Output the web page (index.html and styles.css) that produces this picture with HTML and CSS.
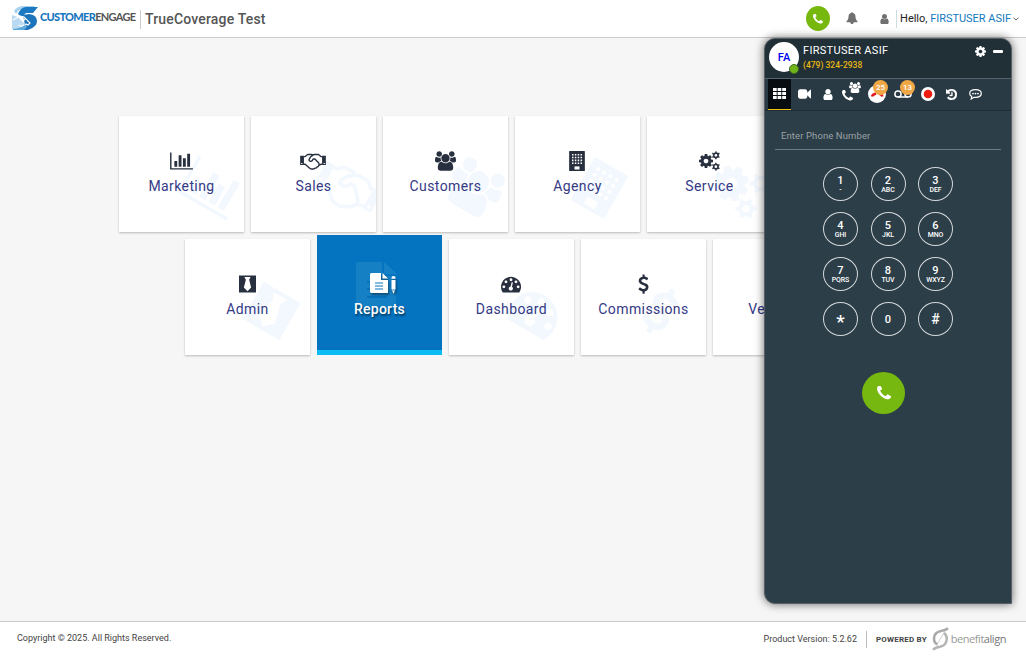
FILE: index.html
```html
<!DOCTYPE html>
<html lang="en">
<head>
<meta charset="utf-8">
<title>TrueCoverage Test</title>
<link rel="stylesheet" href="styles.css">
</head>
<body>
<svg class="sprite" width="0" height="0">
  <symbol id="bars" viewBox="0 0 2048 1792"><path d="M640 896v512h-256v-512h256zm384-512v1024h-256v-1024h256zm1024 1152v128h-2048v-1536h128v1408h1920zm-640-896v768h-256v-768h256zm384-384v1152h-256v-1152h256z"/></symbol>
  <symbol id="handshake" viewBox="0 0 2304 1792"><path d="M0 420h340v840H0zM1964 420h340v840h-340z"/><path d="M340 500h110l230-190h360l110 60 110-60h380l220 190h104M340 1190h110l380 330q150 130 320 80 110 30 200-70 120 10 170-100 130-20 150-150l190-90h104M1150 370l-230 170-130 250q0 120 130 140 120 10 190-110l50-100h160l350 360q60 100 0 200" fill="none" stroke="currentColor" stroke-width="125" stroke-linejoin="round"/><path class="hole" d="M90 1070h110v100H90zM2100 1070h110v100h-110z"/></symbol>
  <symbol id="group" viewBox="0 0 1920 1792"><path d="M593 896q-162 5-265 128h-134q-82 0-138-40.500t-56-118.500q0-353 124-353 6 0 43.500 21t97.500 42.500 119 21.500q67 0 133-23-5 37-5 66 0 139 81 256zm1071 637q0 120-73 189.500t-194 69.500h-874q-121 0-194-69.500t-73-189.500q0-53 3.500-103.500t14-109 26.500-108.500 43-97.500 62-81 85.500-53.500 111.500-20q10 0 43 21.500t73 48 107 48 135 21.500 135-21.500 107-48 73-48 43-21.500q61 0 111.500 20t85.500 53.500 62 81 43 97.500 26.500 108.500 14 109 3.500 103.500zm-1024-1277q0 106-75 181t-181 75-181-75-75-181 75-181 181-75 181 75 75 181zm704 384q0 159-112.500 271.500t-271.500 112.500-271.500-112.500-112.500-271.500 112.500-271.500 271.500-112.500 271.500 112.500 112.500 271.500zm576 225q0 78-56 118.500t-138 40.500h-134q-103-123-265-128 81-117 81-256 0-29-5-66 66 23 133 23 59 0 119-21.500t97.500-42.500 43.500-21q124 0 124 353zm-128-609q0 106-75 181t-181 75-181-75-75-181 75-181 181-75 181 75 75 181z"/></symbol>
  <symbol id="building" viewBox="0 0 1408 1792"><rect width="1408" height="1792" rx="50"/><path class="hole" d="M480 1380h448v280H480z"/><path class="holeline" d="M256 328H1200M256 584H1200M256 840H1200M256 1096H1200" stroke-width="135" stroke-dasharray="135 120"/></symbol>
  <symbol id="cog" viewBox="128 128 1536 1536"><path d="M1152 896q0-106-75-181t-181-75-181 75-75 181 75 181 181 75 181-75 75-181zm512-109v222q0 12-8 23t-20 13l-185 28q-19 54-39 91 35 50 107 138 10 12 10 25t-9 23q-27 37-99 108t-94 71q-12 0-26-9l-138-108q-44 23-91 38-16 136-29 186-7 28-36 28h-222q-14 0-24.500-8.500t-11.500-21.500l-28-184q-49-16-90-37l-141 107q-10 9-25 9-14 0-25-11-126-114-165-168-7-10-7-23 0-12 8-23 15-21 51-66.500t54-70.500q-27-50-41-99l-183-27q-13-2-21-12.500t-8-23.500v-222q0-12 8-23t19-13l186-28q14-46 39-92-40-57-107-138-10-12-10-24 0-10 9-23 26-36 98.500-107.500t94.500-71.500q13 0 26 10l138 107q44-23 91-38 16-136 29-186 7-28 36-28h222q14 0 24.500 8.500t11.500 21.500l28 184q49 16 90 37l142-107q9-9 24-9 13 0 25 10 129 119 165 170 7 8 7 22 0 12-8 23-15 21-51 66.500t-54 70.500q26 50 41 98l183 28q13 2 21 12.500t8 23.500z"/></symbol>
  <symbol id="gear6" viewBox="0 0 100 100"><circle cx="50" cy="50" r="27" fill="none" stroke="currentColor" stroke-width="20"/><path d="M41 0h18v18H41zM41 82h18v18H41z"/><path d="M41 0h18v18H41zM41 82h18v18H41z" transform="rotate(60 50 50)"/><path d="M41 0h18v18H41zM41 82h18v18H41z" transform="rotate(120 50 50)"/></symbol>
  <symbol id="cogs" viewBox="0 0 1920 1792"><use href="#cog" x="0" y="256" width="1280" height="1280"/><use href="#gear6" x="1170" y="0" width="750" height="750"/><use href="#gear6" x="1170" y="1040" width="750" height="750"/></symbol>
  <symbol id="tie" viewBox="0 0 1536 1792"><rect y="128" width="1536" height="1536"/><path class="hole" d="M490 270h556l-130 250 180 700-328 320-328-320 180-700z"/></symbol>
  <symbol id="gauge" viewBox="0 0 1792 1792"><path d="M0 1152a896 896 0 1 1 1650 484q-20 28-60 28H200q-40 0-60-28A890 890 0 0 1 0 1152z"/><g class="hole"><circle cx="256" cy="1152" r="128"/><circle cx="448" cy="704" r="128"/><circle cx="896" cy="512" r="128"/><circle cx="1344" cy="704" r="128"/><circle cx="1536" cy="1152" r="128"/><circle cx="880" cy="1300" r="190"/><path d="M840 1200l110-460 120 30-110 470z"/></g></symbol>
  <symbol id="dollar" viewBox="384 0 1024 1792"><path d="M1362 1185q0 153-99.500 263.500t-258.500 136.500v175q0 14-9 23t-23 9h-135q-13 0-22.500-9.500t-9.500-22.500v-175q-66-9-127.500-31t-101.500-44.500-74-48-46.500-37.500-17.500-18q-17-21-2-41l103-135q7-10 23-12 15-2 24 9l2 2q113 99 243 125 37 8 74 8 81 0 142.500-43t61.500-122q0-28-15-53t-33.500-42-58.500-37.500-66-32-80-32.500q-39-16-61.500-25t-61.500-26.500-62.500-31-56.500-35.500-53.500-42.500-43.500-49-35.500-58-21-66.500-8.500-78q0-138 98-242t255-134v-180q0-13 9.500-22.500t22.500-9.500h135q14 0 23 9t9 23v176q57 6 110.500 23t87 33.500 63.500 37.500 39 29 15 14q17 18 5 38l-81 146q-8 15-23 16-14 3-27-7-3-3-14.500-12t-39-26.500-58.500-32-74.500-26-85.500-11.500q-95 0-155 43t-60 111q0 26 8.500 48t29.500 41.500 39.500 33 56 31 60.500 27 70 27.500q53 20 81 31.500t76 35 75.500 42.500 62 50 53 63.500 31.500 76.500 13 94z"/></symbol>
  <symbol id="phone" viewBox="192 192 1408 1408"><path d="M1600 1240q0 27-10 70.500t-21 68.500q-21 50-122 106-94 51-186 51-27 0-53-3.500t-57.500-12.500-47-14.500-55.500-20.500-49-18q-98-35-175-83-127-79-264-216t-216-264q-48-77-83-175-3-9-18-49t-20.500-55.500-14.500-47-12.500-57.500-3.500-53q0-92 51-186 56-101 106-122 25-11 68.500-21t70.500-10q14 0 21 3 18 6 53 76 11 19 30 54t35 63.500 31 53.500q3 4 17.500 25t21.500 35.500 7 28.500q0 20-28.500 50t-62 55-62 53-28.500 46q0 9 5 22.500t8.500 20.500 14 24 11.500 19q76 137 174 235t235 174q2 1 19 11.500t24 14 20.500 8.500 22.500 5q18 0 46-28.500t53-62 55-62 50-28.500q14 0 28.500 7t35.500 21.500 25 17.500q25 15 53.500 31t63.500 35 54 30q70 35 76 53 3 7 3 21z"/></symbol>
  <symbol id="bell" viewBox="0 0 1792 1792"><path d="M1728 1408q0 52-38 90t-90 38h-448q0 106-75 181t-181 75-181-75-75-181h-448q-52 0-90-38t-38-90q50-42 91-88t85-119.500 74.500-158.500 50-206 19.500-260q0-152 117-282.500t307-158.500q-8-19-8-39 0-40 28-68t68-28 68 28 28 68q0 20-8 39 190 28 307 158.500t117 282.500q0 139 19.500 260t50 206 74.500 158.500 85 119.500 91 88z"/></symbol>
  <symbol id="user" viewBox="256 128 1280 1536"><path d="M1536 1399q0 109-62.500 187t-150.500 78h-854q-88 0-150.500-78t-62.500-187q0-85 8.500-160.500t31.500-152 58.500-131 94-89 134.500-34.500q131 128 313 128t313-128q76 0 134.500 34.500t94 89 58.500 131 31.500 152 8.500 160.500zm-256-887q0 159-112.500 271.500t-271.500 112.500-271.500-112.500-112.500-271.500 112.500-271.500 271.500-112.500 271.500 112.500 112.500 271.500z"/></symbol>
  <symbol id="video" viewBox="0 256 1792 1280"><path d="M1792 352v1088q0 42-39 59-13 5-25 5-27 0-45-19l-403-403v166q0 119-84.500 203.500t-203.500 84.500h-704q-119 0-203.500-84.500t-84.500-203.500v-704q0-119 84.500-203.500t203.500-84.500h704q119 0 203.500 84.500t84.500 203.500v165l403-402q18-19 45-19 12 0 25 5 39 17 39 59z"/></symbol>
  <symbol id="history" viewBox="128 128 1536 1536"><path d="M1664 896q0 156-61 298t-164 245-245 164-298 61q-172 0-327-72.500t-264-204.500q-7-10-6.500-22.500t8.500-20.500l137-138q10-9 25-9 16 2 23 12 73 95 179 147t225 52q104 0 198.500-40.500t163.500-109.500 109.500-163.500 40.500-198.500-40.500-198.500-109.500-163.500-163.500-109.500-198.500-40.500q-98 0-188 35.500t-160 101.500l137 138q31 30 14 69-17 40-59 40h-448q-26 0-45-19t-19-45v-448q0-42 40-59 39-17 69 14l130 129q107-101 244.500-156.500t284.500-55.500q156 0 298 61t245 164 164 245 61 298zm-640-288v448q0 14-9 23t-23 9h-320q-14 0-23-9t-9-23v-64q0-14 9-23t23-9h224v-352q0-14 9-23t23-9h64q14 0 23 9t9 23z" stroke="currentColor" stroke-width="60"/></symbol>
</svg>

<div class="page">
  <header class="topbar">
    <div class="brand">
      <svg class="brand-mark" viewBox="0 0 26 26">
        <path d="M2 6Q5 1 12 1H23L20 5H7L4 9z" fill="#a9d2ef"/>
        <path d="M6 9Q9 2 14 2H26L21 8H14L10 12z" fill="#1b79c3"/>
        <path d="M0 10L6 12 18 24H0z" fill="#b9daf1"/>
        <path d="M11 10L17 9Q25 10 25 16T16 25H8L13 20z" fill="#1e74bb"/>
        <path d="M1 15l7-4 4 1 6 6-2 2-2-1-1 2-2-1-1 2-3-2M7 12l4 4 2-2" fill="none" stroke="#fff" stroke-width="1.100"/>
        <path d="M1 24q8-1 12-4l2 2-3 3H1z" fill="#5fa9dc"/>
      </svg>
      <span class="brand-name"><span class="brand-blue">CUSTOMER</span>ENGAGE</span>
      <span class="tenant">TrueCoverage Test</span>
    </div>
    <div class="account">
      <span class="call-dot"><svg><use href="#phone"/></svg></span>
      <svg class="bell"><use href="#bell"/></svg>
      <svg class="person"><use href="#user"/></svg>
      <span class="hello">Hello, <span class="link">FIRSTUSER ASIF</span></span>
      <svg class="chev" viewBox="0 0 6 4"><path d="M.5.8L3 3 5.500.8" fill="none" stroke="#666"/></svg>
    </div>
  </header>

  <main class="tiles">
    <div class="row">
      <div class="tile"><svg class="mark w23"><use href="#bars"/></svg><svg class="icon w23"><use href="#bars"/></svg><span class="label">Marketing</span></div>
      <div class="tile"><svg class="mark w26"><use href="#handshake"/></svg><svg class="icon w26"><use href="#handshake"/></svg><span class="label">Sales</span></div>
      <div class="tile"><svg class="mark w21"><use href="#group"/></svg><svg class="icon w21"><use href="#group"/></svg><span class="label">Customers</span></div>
      <div class="tile"><svg class="mark w16"><use href="#building"/></svg><svg class="icon w16"><use href="#building"/></svg><span class="label">Agency</span></div>
      <div class="tile"><svg class="mark w21"><use href="#cogs"/></svg><svg class="icon w21"><use href="#cogs"/></svg><span class="label">Service</span></div>
      <div class="tile"></div>
    </div>
    <div class="row">
      <div class="tile"><svg class="mark w17"><use href="#tie"/></svg><svg class="icon w17"><use href="#tie"/></svg><span class="label">Admin</span></div>
      <div class="tile active">
        <svg class="ghost" viewBox="0 0 42 44"><path d="M2 0h24v14h14v30H2q-2 0-2-2V2q0-2 2-2zM28 0l13 12H28z" fill="#1680c5"/><path d="M11 20h8M11 27h8M11 35h20" stroke="#0672bb" stroke-width="2"/></svg>
        <svg class="icon report" viewBox="0 0 27 22"><path d="M1.500 0H11v7h7v13H1.500Q0 20 0 18.500v-17Q0 0 1.500 0zM12.500 0L18 5.500h-5.500z"/><path d="M5 10h8M5 13h8M5 16h8" stroke="#0474c1" stroke-width="1.200"/><path d="M21.500 5q0-2 2-2t2 2v.7h-4zM21.500 7h4v9l-2 5-2-5z"/><path d="M21.500 17h4" stroke="#0474c1" stroke-width=".8"/></svg>
        <span class="label">Reports</span>
      </div>
      <div class="tile"><svg class="mark w20"><use href="#gauge"/></svg><svg class="icon w20"><use href="#gauge"/></svg><span class="label">Dashboard</span></div>
      <div class="tile"><svg class="mark w11"><use href="#dollar"/></svg><svg class="icon w11"><use href="#dollar"/></svg><span class="label">Commissions</span></div>
      <div class="tile"><span class="icon"></span><span class="label">Vendors</span></div>
    </div>
  </main>

  <footer class="foot">
    <span>Copyright © 2025. All Rights Reserved.</span>
    <div class="foot-right">
      <span class="version">Product Version: 5.2.62</span>
      <span class="powered">POWERED BY</span>
      <svg class="ba-mark" viewBox="0 0 16 24"><path d="M15.500 1.200Q13 3.500 8.500 4 1.500 5.500 1.500 11.500q0 4.500 3.500 6" fill="none" stroke="#aaa" stroke-width="2.600"/><path d="M.5 22.800q2-2.300 7-3 6.500-1.300 6.800-7.800 0-4-2.800-6" fill="none" stroke="#b4b4b4" stroke-width="2.500"/><path d="M12.500 4L4.500 17.500" stroke="#bbb" stroke-width=".7"/></svg>
      <span class="ba-name">benefit<span class="align">align</span></span>
    </div>
  </footer>
</div>

<aside class="dialer">
  <div class="who">
    <div class="avatar">FA<span class="status"></span></div>
    <div class="who-text"><div class="name">FIRSTUSER ASIF</div><div class="number">(479) 324-2938</div></div>
    <svg class="gear"><use href="#cog"/></svg>
    <span class="minimize"></span>
  </div>
  <nav class="tabs">
    <span class="tab current"><svg width="13" height="11" viewBox="0 0 13 11"><path d="M0 0h3.700v3H0zM4.600 0h3.700v3H4.600zM9.200 0H13v3H9.200zM0 4h3.700v3H0zM4.600 4h3.700v3H4.600zM9.200 4H13v3H9.200zM0 8h3.700v3H0zM4.600 8h3.700v3H4.600zM9.200 8H13v3H9.200z"/></svg></span>
    <span class="tab t-video"><svg width="13" height="10"><use href="#video"/></svg></span>
    <span class="tab t-user"><svg width="10" height="11"><use href="#user"/></svg></span>
    <span class="tab t-conf"><svg width="11" height="11"><use href="#phone"/></svg><svg class="over" width="12" height="11"><use href="#group"/></svg></span>
    <span class="tab t-missed"><svg width="18" height="18" viewBox="0 0 18 18"><circle cx="9" cy="9" r="9"/><path d="M4 11.500Q4.500 9.500 8 8.500M11 8.500q3 1 3.500 3" fill="none" stroke="#e11b1b" stroke-width="2.500"/></svg><b class="badge">25</b></span>
    <span class="tab t-voice"><svg width="18" height="8" viewBox="0 0 18 8"><path d="M4 7h10" stroke="#fff" stroke-width="1.500"/><g fill="none" stroke="#fff" stroke-width="1.500"><circle cx="4" cy="4" r="3.100"/><circle cx="14" cy="4" r="3.100"/></g></svg><b class="badge">13</b></span>
    <span class="tab t-rec"><svg width="14" height="14" viewBox="0 0 14 14"><circle cx="7" cy="7" r="7"/><circle cx="7" cy="7" r="4.300" fill="#ee1c10"/></svg></span>
    <span class="tab t-hist"><svg width="11" height="11"><use href="#history"/></svg></span>
    <span class="tab t-chat"><svg width="13" height="11" viewBox="0 0 13 11"><path d="M6.500.7C3.200.7.700 2.300.7 4.600c0 1.300.8 2.300 2 3L2.200 10l2.700-1.700 1.600.1c3.300 0 5.800-1.500 5.800-3.800S9.800.7 6.500.7z" fill="none" stroke="#fff" stroke-width="1.200"/><circle cx="4" cy="4.600" r=".9"/><circle cx="6.500" cy="4.600" r=".9"/><circle cx="9" cy="4.600" r=".9"/></svg></span>
  </nav>
  <div class="entry">Enter Phone Number</div>
  <div class="keys">
    <div class="key">1<small>-</small></div><div class="key">2<small>ABC</small></div><div class="key">3<small>DEF</small></div>
    <div class="key">4<small>GHI</small></div><div class="key">5<small>JKL</small></div><div class="key">6<small>MNO</small></div>
    <div class="key">7<small>PQRS</small></div><div class="key">8<small>TUV</small></div><div class="key">9<small>WXYZ</small></div>
    <div class="key star"><span>*</span></div><div class="key zero">0</div><div class="key hash">#</div>
  </div>
  <div class="dial"><svg><use href="#phone"/></svg></div>
</aside>
</body>
</html>
```
FILE: styles.css
```css
* { box-sizing: border-box; }
body { margin: 0; font-family: Roboto, "Liberation Sans", sans-serif; color: #444; background: #fff; overflow: hidden; }
svg { fill: currentColor; display: block; flex: none; }
.sprite { position: absolute; }
.hole { fill: #fff; }
.holeline { stroke: #fff; fill: none; }
.page { display: flex; flex-direction: column; width: 1026px; height: 666px; }

.topbar { display: flex; justify-content: space-between; height: 38px; border-bottom: 1px solid #ccc; }
.brand { display: flex; align-items: center; padding-left: 12px; }
.brand-mark { width: 26px; height: 26px; margin-bottom: 2px; }
.brand-name { font: 700 11px/14px Lato, sans-serif; width: 100px; margin-left: 2px; margin-bottom: 3px; letter-spacing: -.7px; color: #555; white-space: nowrap; }
.brand-blue { color: #1877bf; font-weight: 900; }
.tenant { border-left: 1px solid #ccc; padding-left: 4px; margin-top: 1px; font-size: 14px; line-height: 19px; font-weight: 500; color: #555; letter-spacing: .17px; white-space: nowrap; }
.account { display: flex; align-items: center; padding-right: 7px; }
.call-dot { display: flex; align-items: center; justify-content: center; width: 24px; height: 25px; border-radius: 50%; background: #77b80e; color: #fff; }
.call-dot svg { width: 10px; height: 10px; }
.bell { width: 12px; height: 12px; margin-left: 16px; margin-bottom: 1px; color: #707070; }
.person { width: 9px; height: 10px; margin-left: 22px; color: #707070; }
.hello { margin-left: 7px; border-left: 1px solid #cfdde2; padding-left: 3px; font-size: 11px; line-height: 18px; letter-spacing: -.02px; color: #222; white-space: nowrap; }
.link { color: #1479bd; }
.chev { width: 6px; height: 4px; margin-left: 2px; }

.tiles { flex: 1; padding: 78px 0 0 119px; background: #f6f6f6; overflow: hidden; }
.row { display: flex; gap: 7px; height: 123px; }
.row + .row { padding-left: 66px; }
.tile { position: relative; flex: none; display: flex; flex-direction: column; align-items: center; width: 125px; height: 116px; padding-top: 35px; background: #fff; box-shadow: 0 1px 2px rgba(0,0,0,.25); overflow: hidden; }
.icon { height: 20px; margin-right: 1px; color: #28303f; z-index: 1; }
.mark { position: absolute; left: 65px; top: 47px; height: 50px; color: #f2f8fd; transform: rotate(30deg); }
.w23.icon { width: 23px; } .w23.mark { width: 57px; }
.w26.icon { width: 26px; } .w26.mark { width: 64px; }
.w21.icon { width: 21px; } .w21.mark { width: 54px; }
.w20.icon { width: 20px; } .w20.mark { width: 50px; left: 62px; }
.w17.icon { width: 17px; } .w17.mark { width: 43px; }
.w16.icon { width: 16px; } .w16.mark { width: 39px; }
.w11.icon { width: 11px; } .w11.mark { width: 29px; }
.label { margin-top: 5px; font-size: 14px; line-height: 20px; letter-spacing: .4px; color: #343a85; z-index: 1; }
.tile.active { height: 120px; margin-top: -4px; padding-top: 38px; background: #0474c1; border-bottom: 5px solid #0dbbf5; box-shadow: none; }
.active .label { margin-top: 4px; color: #fff; font-weight: 500; letter-spacing: .25px; text-shadow: 1px 2px 2px rgba(0,0,0,.5); }
.report { width: 27px; height: 22px; color: #fff; margin: 0 0 0 8px; filter: drop-shadow(1px 2px 1px rgba(0,0,0,.4)); }
.ghost { position: absolute; left: 39px; top: 27px; width: 42px; height: 44px; }

.foot { display: flex; justify-content: space-between; height: 45px; padding: 4px 20px 0 17px; border-top: 1px solid #ccc; font-size: 9px; line-height: 24px; }
.foot-right { display: flex; height: 26px; align-items: center; }
.version { padding-right: 9px; }
.powered { border-left: 1px solid #bbb; padding-left: 9px; font-size: 8px; line-height: 17px; font-weight: 700; letter-spacing: .2px; white-space: nowrap; }
.ba-mark { width: 17px; height: 24px; margin-left: 5px; }
.ba-name { margin-left: 2px; font: 400 11px/20px "Open Sans", sans-serif; letter-spacing: -.45px; color: #999; }
.align { color: #777; }

.dialer { position: absolute; z-index: 2; left: 764px; top: 38px; width: 248px; height: 566px; background: #2c3e48; border: 1px solid #596065; border-radius: 11px 11px 0 11px; box-shadow: 0 0 10px rgba(0,0,0,.6); color: #fff; overflow: hidden; }
.who { display: flex; height: 40px; padding: 3px 8px 0 4px; background: #212f37; border-bottom: 1px solid #54646c; }
.avatar { position: relative; display: flex; align-items: center; justify-content: center; width: 30px; height: 30px; border-radius: 50%; background: #fff; color: #0000f0; font-size: 11px; font-weight: 500; }
.status { position: absolute; right: 0; bottom: -2px; width: 10px; height: 10px; border-radius: 50%; background: #6fb51a; border: 1px solid #3f6c20; }
.who-text { width: 170px; margin-left: 4px; white-space: nowrap; }
.name { font-size: 11px; line-height: 17px; letter-spacing: .3px; }
.number { font-size: 8.500px; line-height: 13px; font-weight: 500; color: #e8b714; }
.gear { width: 11px; height: 11px; margin: 4px 0 0 2px; }
.minimize { width: 10px; height: 3px; margin: 8px 0 0 7px; background: #fff; border-radius: 1px; }
.tabs { display: flex; height: 32px; padding-left: 3px; background: #293a44; border-bottom: 1px solid #1e2d35; }
.tab { position: relative; display: flex; align-items: center; justify-content: center; height: 31px; width: 23.500px; padding-bottom: 1px; }
.current { width: 23px; background: #070d11; border-bottom: 1px solid #f1c40f; }
.t-video { width: 26px; } .t-user { width: 21px; } .t-conf { width: 22px; padding: 2px 3px 0 0; }
.t-missed { width: 34px; } .t-voice { width: 17px; } .t-rec { width: 34px; }
.t-hist { width: 12px; } .t-chat { width: 37px; }
.over { position: absolute; left: 11px; top: 3px; }
.badge { position: absolute; top: 1px; left: 13px; width: 15px; height: 15px; border-radius: 50%; background: #f0a847; font-size: 8px; line-height: 16px; text-align: center; font-weight: 500; }
.t-voice .badge { left: 6px; }
.entry { height: 39px; margin: 0 10px; padding: 19px 6px 0; border-bottom: 1px solid #6c7a82; font-size: 9.500px; line-height: 12px; letter-spacing: .1px; color: #9aa1a5; }
.keys { display: grid; grid-template-columns: repeat(3, 35px); grid-auto-rows: 34px; gap: 11px 12.500px; padding: 17px 0 0 58px; }
.key { display: flex; flex-direction: column; align-items: center; justify-content: center; border: 1px solid #d5d9db; border-radius: 50%; font-size: 11px; line-height: 12px; font-weight: 500; }
.key small { font-size: 7px; line-height: 7px; letter-spacing: -.1px; }
.key.star { font-size: 19px; padding-top: 6px; } .key.zero { padding-top: 1px; } .key.hash { font-size: 14px; }
.dial { display: flex; align-items: center; justify-content: center; width: 43px; height: 42px; margin: 36px 0 0 97px; border-radius: 50%; background: #76b80f; }
.dial svg { width: 14px; height: 14px; }
```
